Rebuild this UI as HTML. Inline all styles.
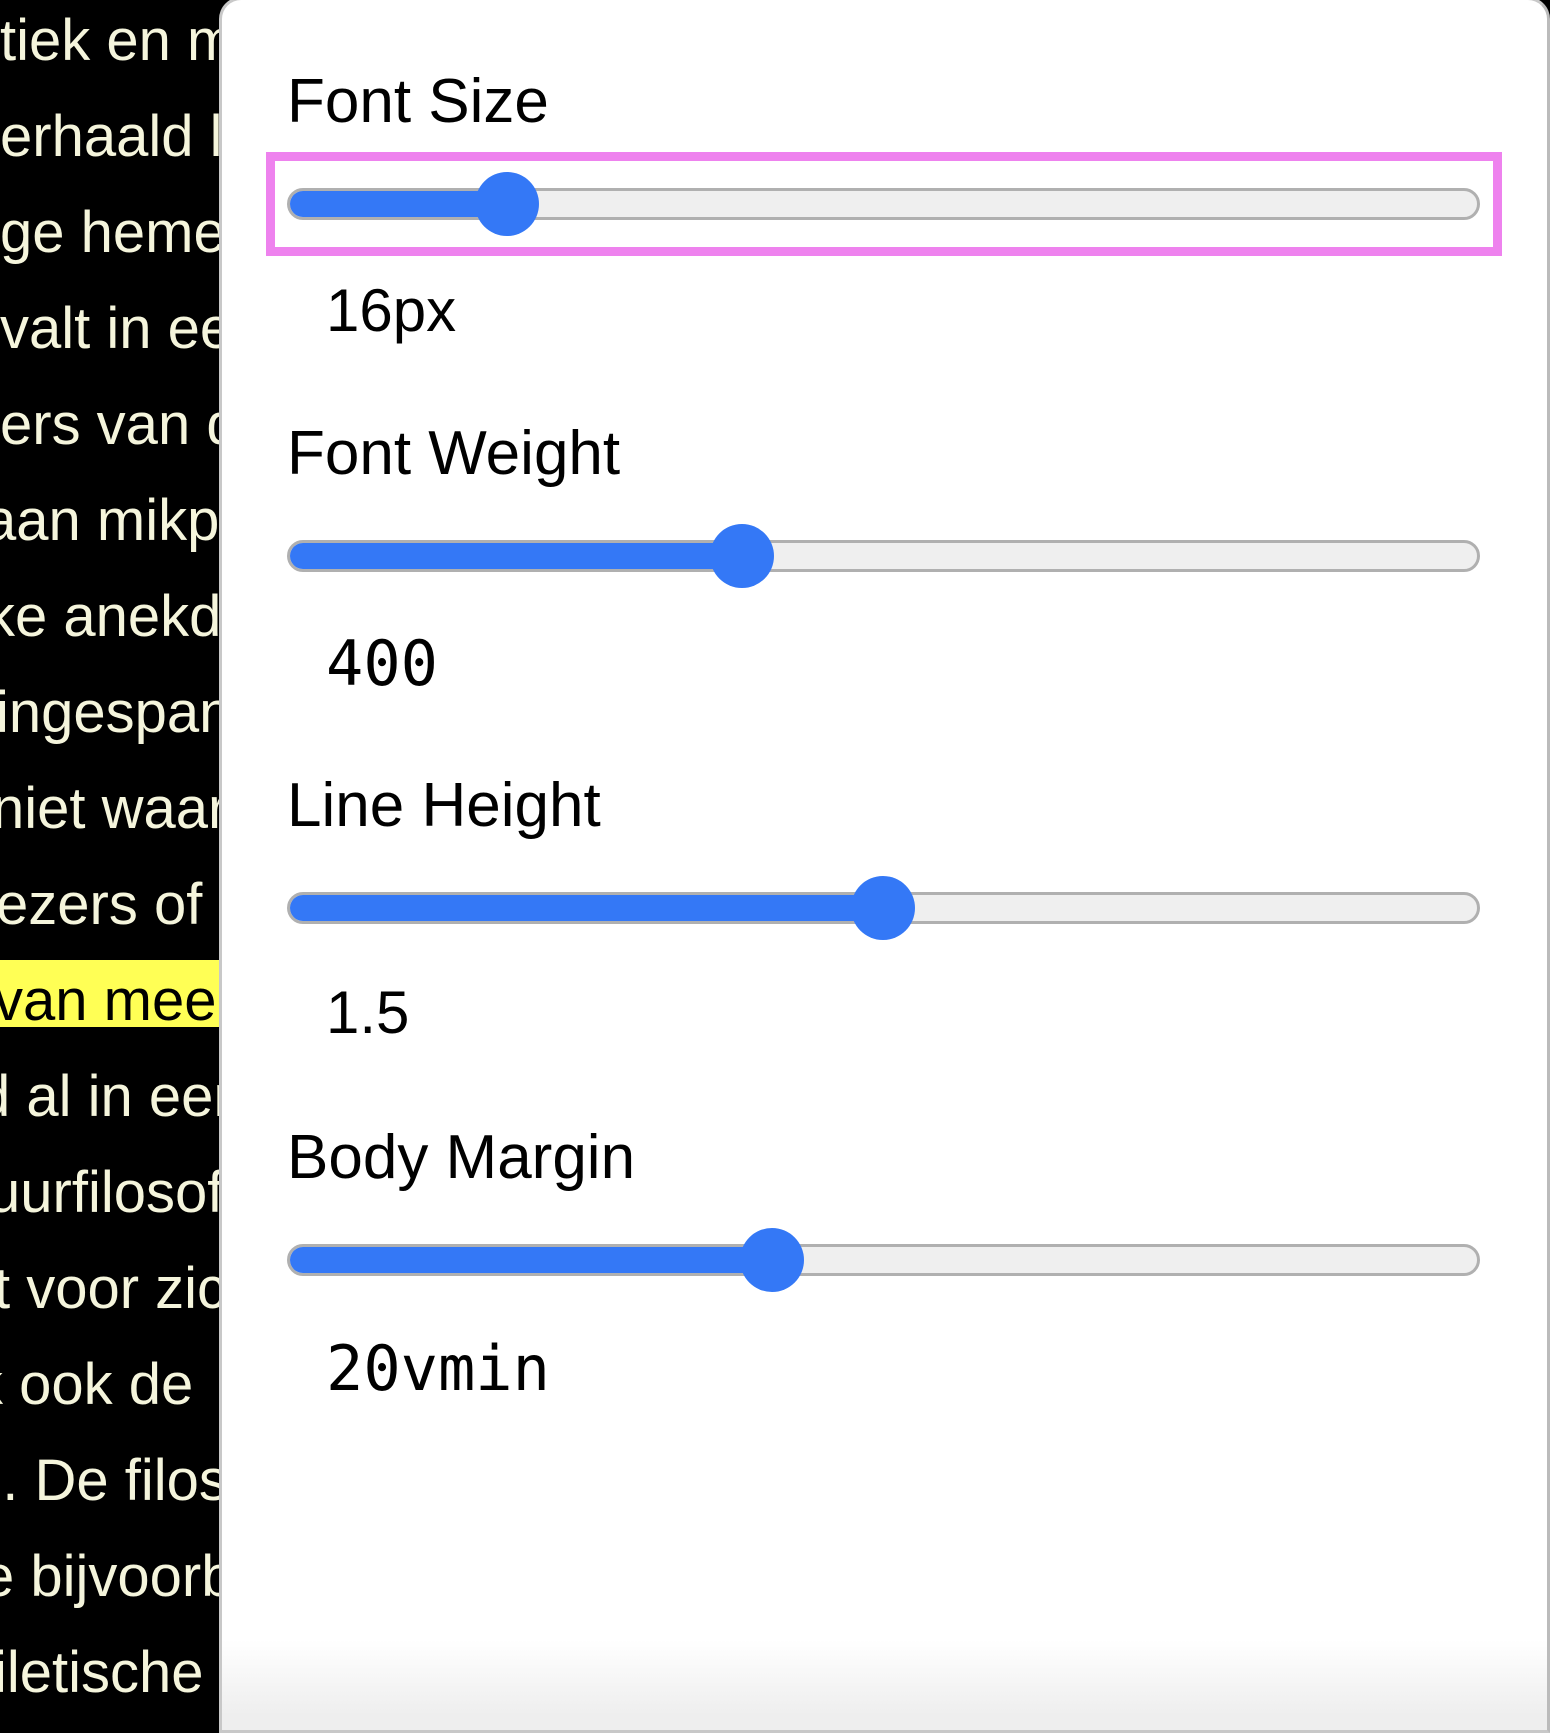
<!DOCTYPE html>
<html><head><meta charset="utf-8"><style>
html,body{margin:0;padding:0;width:1550px;height:1716px;overflow:hidden;background:#000;font-family:"Liberation Sans",Arial,sans-serif}
.l{position:absolute;left:0;font-size:58px;color:#f5f5dc;white-space:nowrap;line-height:1}
.hl{position:absolute;left:0;top:960px;width:230px;height:67px;background:#ffff55}
.panel{position:absolute;left:219px;top:-3px;width:1325px;height:1730px;background:linear-gradient(#fff 0,#fff 1640px,#eee 1716px);border:3px solid #c8c8c8;border-right-color:#bbb;border-radius:22px 22px 0 0;box-sizing:content-box}
.lab{position:absolute;left:287px;font-size:62px;color:#000;line-height:1}
.val{position:absolute;left:326px;font-size:60px;color:#000;line-height:1}
.mono{font-family:"DejaVu Sans Mono","Liberation Mono",monospace;font-size:62px}
.track{position:absolute;left:287px;width:1187px;height:26px;border:3px solid #b0b0b0;border-radius:16px;background:#efefef;overflow:hidden}
.fill{position:absolute;left:0;top:0;height:100%;background:#3478f6}
.thumb{position:absolute;width:64px;height:64px;border-radius:50%;background:#3478f6}
.pink{position:absolute;left:266px;top:152px;width:1218px;height:86px;border:9px solid #ee82ee}
</style></head><body>
<div class="hl"></div>
<div class="l" style="top:12px">tiek en mag</div>
<div class="l" style="top:108px">erhaald la</div>
<div class="l" style="top:204px">ge hemel</div>
<div class="l" style="top:300px">valt in een</div>
<div class="l" style="top:396px">ers van de</div>
<div class="l" style="top:492px;left:-16px">aan mikpunt</div>
<div class="l" style="top:588px;left:-14px">ke anekdote</div>
<div class="l" style="top:684px;left:-4px">ingespannen</div>
<div class="l" style="top:780px;left:-8px">niet waar</div>
<div class="l" style="top:876px;left:-4px">ezers of</div>
<div class="l" style="top:972px;left:-6px;color:#000">van meer</div>
<div class="l" style="top:1068px;left:-22px">d al in een</div>
<div class="l" style="top:1164px;left:-12px">uurfilosofie</div>
<div class="l" style="top:1260px;left:-6px">t voor zich</div>
<div class="l" style="top:1356px;left:-26px">k ook de</div>
<div class="l" style="top:1452px;left:-30px">n. De filosofen</div>
<div class="l" style="top:1548px;left:-18px">e bijvoorbeeld</div>
<div class="l" style="top:1644px;left:-6px">iletische</div>

<div class="panel"></div>
<div class="lab" style="top:71px">Font Size</div>
<div class="pink"></div>
<div class="track" style="top:188px"><div class="fill" style="width:220px"></div></div>
<div class="thumb" style="left:475px;top:172px"></div>
<div class="val" style="top:281px">16px</div>

<div class="lab" style="top:423px">Font Weight</div>
<div class="track" style="top:540px"><div class="fill" style="width:455px"></div></div>
<div class="thumb" style="left:710px;top:524px"></div>
<div class="val mono" style="top:633px">400</div>

<div class="lab" style="top:775px">Line Height</div>
<div class="track" style="top:892px"><div class="fill" style="width:596px"></div></div>
<div class="thumb" style="left:851px;top:876px"></div>
<div class="val" style="top:983px">1.5</div>

<div class="lab" style="top:1127px">Body Margin</div>
<div class="track" style="top:1244px"><div class="fill" style="width:485px"></div></div>
<div class="thumb" style="left:740px;top:1228px"></div>
<div class="val mono" style="top:1338px">20vmin</div>
</body></html>
